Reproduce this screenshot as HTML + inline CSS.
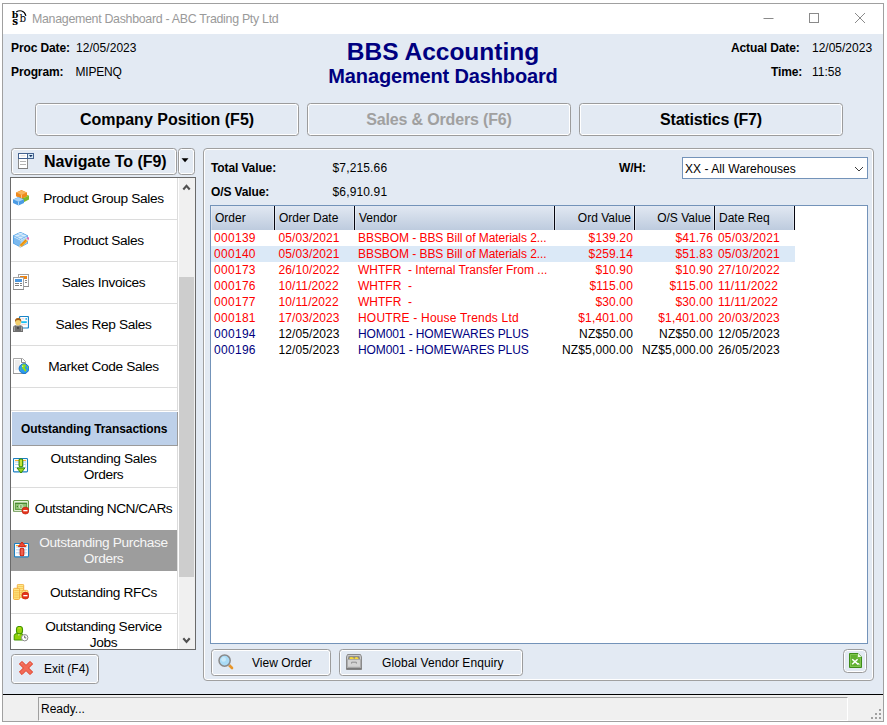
<!DOCTYPE html>
<html>
<head>
<meta charset="utf-8">
<title>Management Dashboard - ABC Trading Pty Ltd</title>
<style>
html,body{margin:0;padding:0;}
body{width:887px;height:725px;background:#fff;position:relative;overflow:hidden;font-family:"Liberation Sans",sans-serif;font-size:12px;color:#000;}
.a{position:absolute;white-space:nowrap;line-height:1;}
#win{left:2px;top:3px;width:880px;height:717px;border:1px solid #a0a0a0;background:#e3eaf3;}
#tbar{left:3px;top:4px;width:880px;height:30px;background:#fff;}
#ttl{left:32px;top:12.6px;font-size:12.4px;letter-spacing:-0.3px;color:#9a9a9a;}
.b{font-weight:bold;letter-spacing:-0.12px;}
.btn{border:1px solid #9c9c9c;border-radius:3.5px;box-shadow:inset 0 0 0 1px #fff;background:#e3eaf3;box-sizing:border-box;}
.tab{font-size:16px;font-weight:bold;text-align:center;}
.hd{color:#000080;font-weight:bold;text-align:center;}
#list{left:10px;top:177px;width:184px;height:471px;border:1px solid #6a6a6a;background:#fff;}
.row{left:11px;width:166px;border-bottom:1px solid #dcdcdc;border-right:1px solid #dcdcdc;background:#fff;box-sizing:content-box;}
.rt{font-size:13.7px;letter-spacing:-0.35px;text-align:center;left:31px;width:145px;line-height:16px;white-space:normal;}
#panel{left:203px;top:148px;width:669px;height:531px;border:1px solid #a0a0a0;border-radius:4px;box-shadow:inset 0 0 0 1px #fff;}
#grid{left:210px;top:205px;width:656px;height:437px;border:1px solid #7393b9;background:#fff;}
.gh{top:206px;height:24px;background:linear-gradient(#e1e8f2,#bdcbde);border-right:1px solid #05050f;box-sizing:border-box;box-shadow:inset -1px 0 0 rgba(255,255,255,.35), inset 1px 0 0 rgba(255,255,255,.35);}
.ght{top:212px;font-size:12px;}
.c{font-size:12px;}
.r{color:#ff0000;}
.n{color:#000080;}
.ra{text-align:right;}
#status{left:3px;top:695px;width:880px;height:26px;background:#f0f0f0;}
</style>
</head>
<body>
<div id="win" class="a"></div>
<div id="tbar" class="a"></div>
<!-- title icon -->
<svg class="a" style="left:8px;top:6px" width="24" height="24" viewBox="0 0 24 24">
<text x="3.8" y="12.9" transform="scale(1,0.93)" font-family="'DejaVu Serif',serif" font-size="10" textLength="6.6" lengthAdjust="spacingAndGlyphs" font-weight="bold" fill="#000">b</text>
<text x="4.2" y="19.1" font-family="'DejaVu Serif',serif" font-size="10.4" font-weight="bold" fill="#000">s</text>
<text x="11.6" y="15.9" font-family="'DejaVu Serif',serif" font-size="10.3" fill="#000">b</text>
<path d="M8.2 6 C11.5 3.8 16.4 4.2 17.9 9.8" fill="none" stroke="#000" stroke-width="1.2"/>
</svg>
<div id="ttl" class="a">Management Dashboard - ABC Trading Pty Ltd</div>
<!-- window controls -->
<svg class="a" style="left:760px;top:8px" width="110" height="20" viewBox="0 0 110 20">
<path d="M3.5 10.5 H13.5" stroke="#8a8a8a" stroke-width="1" fill="none"/>
<rect x="49.5" y="5.5" width="9" height="9" fill="none" stroke="#8a8a8a" stroke-width="1"/>
<path d="M95 5 L105 15 M105 5 L95 15" stroke="#8a8a8a" stroke-width="1" fill="none"/>
</svg>

<!-- header info -->
<div class="a b" id="pd" style="left:11px;top:42px;">Proc Date:</div>
<div class="a" id="pdv" style="left:76px;top:42px;letter-spacing:0.05px;">12/05/2023</div>
<div class="a b" id="pg" style="left:11px;top:66px;">Program:</div>
<div class="a" id="pgv" style="left:75.5px;top:66px;letter-spacing:-0.2px;">MIPENQ</div>
<div class="a hd" id="h1" style="left:243px;width:400px;top:40px;font-size:24.5px;">BBS Accounting</div>
<div class="a hd" id="h2" style="left:243px;width:400px;top:65.5px;font-size:20px;letter-spacing:-0.15px;">Management Dashboard</div>
<div class="a b" id="ad" style="left:731px;top:42px;">Actual Date:</div>
<div class="a" id="adv" style="left:812px;top:42px;">12/05/2023</div>
<div class="a b" id="tm" style="left:771px;top:66px;">Time:</div>
<div class="a" id="tmv" style="left:812px;top:66px;">11:58</div>

<!-- tabs -->
<div class="a btn" style="left:35px;top:103px;width:264px;height:33px;"></div>
<div class="a tab" id="t1" style="left:35px;top:111.6px;width:264px;">Company Position (F5)</div>
<div class="a btn" style="left:307px;top:103px;width:264px;height:33px;"></div>
<div class="a tab" id="t2" style="left:307px;top:111.6px;letter-spacing:-0.17px;width:264px;color:#a0a0a0;">Sales &amp; Orders (F6)</div>
<div class="a btn" style="left:579px;top:103px;width:264px;height:33px;"></div>
<div class="a tab" id="t3" style="left:579px;top:111.6px;letter-spacing:-0.2px;width:264px;">Statistics (F7)</div>

<!-- navigate -->
<div class="a btn" style="left:11px;top:148px;width:166px;height:27px;"></div>
<div class="a btn" style="left:178px;top:148px;width:17px;height:27px;"></div>
<svg class="a" style="left:18px;top:153px" width="16" height="16" viewBox="0 0 16 16">
<rect x="0.5" y="5.5" width="9" height="10" fill="#fff" stroke="#8c8c8c"/>
<path d="M0 15.5 h10" stroke="#7e7e7e"/>
<path d="M2 8.5 h6 M2 11.5 h6" stroke="#b4b4b4"/>
<rect x="0.5" y="0.5" width="15" height="5" fill="#fff" stroke="#44628f"/>
<rect x="10" y="1" width="5" height="4" fill="#d6ebf8"/>
<path d="M9.5 0.5 v5" stroke="#44628f"/>
<path d="M2.5 2.8 h5" stroke="#e4e4e4" stroke-width="1.4"/>
<path d="M11 2 h3.6 l-1.8 2.2z" fill="#16305e"/>
</svg>
<div class="a b" id="nav" style="left:44px;top:154px;font-size:16px;letter-spacing:-0.04px;">Navigate To (F9)</div>
<svg class="a" style="left:180px;top:158px" width="10" height="6" viewBox="0 0 10 6"><path d="M1.5 0.3 h7 l-3.5 4z" fill="#000"/></svg>

<!-- list -->
<div id="list" class="a"></div>
<div id="sb" class="a" style="left:179px;top:178px;width:16px;height:471px;background:#f0f0f0;"></div>
<div class="a" style="left:179px;top:277px;width:15px;height:300px;background:#cdcdcd;"></div>
<svg class="a" style="left:182px;top:183px" width="10" height="8" viewBox="0 0 10 8"><path d="M1.3 6.5 L4.5 2.8 L7.7 6.5" fill="none" stroke="#505050" stroke-width="2.1"/></svg>
<svg class="a" style="left:182px;top:636px" width="10" height="8" viewBox="0 0 10 8"><path d="M1.3 2.3 L4.5 6 L7.7 2.3" fill="none" stroke="#505050" stroke-width="2.1"/></svg>

<div class="a row" style="top:178px;height:41px;"></div>
<div class="a row" style="top:220px;height:41px;"></div>
<div class="a row" style="top:262px;height:41px;"></div>
<div class="a row" style="top:304px;height:41px;"></div>
<div class="a row" style="top:346px;height:41px;"></div>
<div class="a row" style="top:388px;height:22px;"></div>
<div class="a" style="left:12px;top:412px;width:165px;height:33px;background:#bdd0e9;border-bottom:1px solid #9a9a9a;border-right:1px solid #9a9a9a;"></div>
<div class="a row" style="top:446px;height:41px;"></div>
<div class="a row" style="top:488px;height:41px;"></div>
<div class="a" style="left:11px;top:529px;width:166px;height:43px;background:#fff;border-right:1px solid #dcdcdc;"></div>
<div class="a" style="left:11px;top:530px;width:166px;height:41px;background:#9d9d9d;"></div>
<div class="a row" style="top:572px;height:41px;"></div>
<div class="a row" style="top:614px;height:35px;border-bottom:none;"></div>

<div class="a rt" id="l1" style="top:190.6px;">Product Group Sales</div>
<div class="a rt" id="l2" style="top:232.6px;">Product Sales</div>
<div class="a rt" id="l3" style="top:274.6px;">Sales Invoices</div>
<div class="a rt" id="l4" style="top:316.6px;">Sales Rep Sales</div>
<div class="a rt" id="l5" style="top:358.6px;">Market Code Sales</div>
<div class="a b" id="l6" style="left:21px;top:423px;letter-spacing:-0.07px;">Outstanding Transactions</div>
<div class="a rt" id="l7" style="top:451px;">Outstanding Sales Orders</div>
<div class="a rt" id="l8" style="top:500.6px;letter-spacing:-0.47px;">Outstanding NCN/CARs</div>
<div class="a rt" id="l9" style="top:535px;color:#f6f6f6;">Outstanding Purchase Orders</div>
<div class="a rt" id="l10" style="top:584.6px;">Outstanding RFCs</div>
<div class="a rt" id="l11" style="top:619px;">Outstanding Service Jobs</div>


<!-- list icons -->
<svg class="a" style="left:13px;top:190px" width="16" height="16" viewBox="0 0 16 16">
<path d="M6 6 L11.5 3.8 L16 5.8 L16 9.6 L11.2 12 L6 10z" fill="#7cb82c"/>
<path d="M6.5 6 L11.5 4.1 L15.6 5.9 L11.2 8z" fill="#a5d455"/>
<path d="M3 2.5 L8.5 0 L14 2.5 L14 6.2 L8.5 8.7 L3 6.2z" fill="#ef8a1e"/>
<path d="M3.5 2.6 L8.5 0.4 L13.5 2.6 L8.5 4.9z" fill="#f8b65e"/>
<path d="M8.5 5 V8.6" stroke="#fbd19a" stroke-width="0.8"/>
<path d="M0 9.4 L5.5 6.9 L11 9.4 L11 13 L5.5 15.6 L0 13z" fill="#4b9be4"/>
<path d="M0.5 9.5 L5.5 7.3 L10.5 9.5 L5.5 11.8z" fill="#a7d2f6"/>
<path d="M5.5 11.9 V15.5" stroke="#c5e2fa" stroke-width="0.8"/>
</svg>
<svg class="a" style="left:13px;top:232px" width="16" height="16" viewBox="0 0 16 16">
<path d="M0 3.4 L5 1 L7.5 0 L10 1 L15 3.4 L15 11.6 L7.5 15.6 L0 11.6z" fill="#4f9fe4"/>
<path d="M0.6 3.7 L7.5 0.5 L14.4 3.7 L7.5 7.2z" fill="#9ccdf5"/>
<ellipse cx="4.3" cy="3.6" rx="2.3" ry="0.9" fill="#d9edfc"/><ellipse cx="10.7" cy="3.6" rx="2.3" ry="0.9" fill="#d9edfc"/>
<ellipse cx="7.5" cy="1.8" rx="2.3" ry="0.9" fill="#d9edfc"/><ellipse cx="7.5" cy="5.6" rx="2.1" ry="0.9" fill="#d9edfc"/>
<path d="M0.8 5 L7.5 8.4 L7.5 14.8 L0.8 11.2z" fill="#7ab9ef"/>
<path d="M7.5 8.4 L14.3 5 L14.3 11.2 L7.5 14.8z" fill="#a5d2f6"/>
<path d="M0.8 4.8 L7.5 8.2 L14.3 4.8" stroke="#e4f2fd" stroke-width="0.9" fill="none"/>
<path d="M6.6 13 L13.2 6.6 L15.2 8.6 L8.6 15z" fill="#f7a31b"/>
<path d="M7.2 13.6 L13.8 7.2" stroke="#d97c08" stroke-width="0.7"/>
<path d="M6.6 13 L6.2 15.4 L8.6 15z" fill="#f3d9a6"/>
<path d="M12.5 7.3 L13.9 5.9 L15.9 7.9 L14.5 9.3z" fill="#d9d9d9"/>
<path d="M13.6 6.2 L14.6 5.2 Q15.6 4.8 16 6 L16 7.2 L15.6 7.9z" fill="#e765b5"/>
</svg>
<svg class="a" style="left:13px;top:274px" width="16" height="16" viewBox="0 0 16 16">
<rect x="5.5" y="0.5" width="10" height="12" fill="#fff" stroke="#a3a3a3"/>
<path d="M5 12.5 h11" stroke="#8d8d8d"/>
<rect x="7" y="2" width="7" height="3" fill="#ee8411"/>
<path d="M12 6.5 h2 M12 8.5 h2" stroke="#8a8a8a"/>
<rect x="0.5" y="3.5" width="10" height="12" fill="#fff" stroke="#a3a3a3"/>
<path d="M0 15.5 h11" stroke="#8d8d8d"/>
<rect x="2" y="5" width="7" height="3" fill="#4a97e0"/>
<path d="M2 9.5 h4 M7 9.5 h2 M2 11.5 h4 M7 11.5 h2" stroke="#7d7d7d"/>
</svg>
<svg class="a" style="left:13px;top:316px" width="16" height="16" viewBox="0 0 16 16">
<rect x="6.5" y="0.5" width="9" height="11.5" rx="1" fill="#fff" stroke="#1b84c6" stroke-width="1.2"/>
<rect x="8.2" y="5.2" width="5.6" height="1.9" fill="#1cc0f2"/>
<circle cx="13.2" cy="2.9" r="0.9" fill="#1cb0ec"/>
<path d="M8.4 2.8 h3 M8.4 8.6 h5.2" stroke="#e0b8b8" stroke-width="0.7"/>
<path d="M0 16 L0 11.6 Q0 9.6 2.4 9.2 L7.6 9.2 Q10 9.6 10 11.6 L10 16z" fill="#6e6e6e"/>
<path d="M3.4 9.2 L5 12.6 L6.6 9.2z" fill="#fff"/>
<path d="M4.5 9.6 h1 l0.3 2.6 l-0.8 0.8 l-0.8 -0.8z" fill="#222"/>
<path d="M1.4 10.5 v4.5 M8.6 10.5 v4.5" stroke="#b8b8b8" stroke-width="0.8"/>
<ellipse cx="5.1" cy="6" rx="2.9" ry="3.4" fill="#f2cf6e"/>
<path d="M2 6.2 Q1.6 2 5.1 2 Q8.8 2 8.2 6.2 Q7.6 4 5.1 4 Q2.6 4 2 6.2z" fill="#a35d12"/>
</svg>
<svg class="a" style="left:13px;top:358px" width="16" height="16" viewBox="0 0 16 16">
<path d="M0.5 0.5 H9.5 L12.5 3.5 V15.5 H0.5z" fill="#fff" stroke="#a9a9a9"/>
<path d="M0 15.5 h13" stroke="#9a9a9a"/>
<rect x="2" y="2" width="5" height="10" fill="#ececec"/>
<path d="M8.5 1 V4.5 H12" stroke="#6f6f6f" fill="none" stroke-width="0.8"/>
<circle cx="11" cy="10.6" r="4.9" fill="#2c9af0" stroke="#0d6fc8" stroke-width="0.9"/>
<path d="M9.2 6.6 Q11.4 5.8 13 6.8 L12.6 8.6 L11.6 9.4 L12.6 11.2 L13.8 11.8 L12.2 14 L11.2 12.6 L10.4 11.4 L9 10 L8.8 8z" fill="#92dd13"/>
<path d="M14.2 8 L15.2 9.6 L14.4 10.6 L13.6 9z M7.2 10.2 L8 11.4 L7.4 12.2z" fill="#92dd13"/>
<circle cx="9.6" cy="8.2" r="0.8" fill="#cfeaff" opacity="0.8"/>
</svg>
<svg class="a" style="left:13px;top:458px" width="16" height="16" viewBox="0 0 16 16">
<rect x="0.5" y="0.5" width="14" height="13.4" rx="0.8" fill="#fff" stroke="#1b7fc2" stroke-width="1.1"/>
<path d="M2 2.4 h11" stroke="#f9a91a" stroke-width="1"/>
<path d="M2 4 h11 M2 6.5 h11 M2 9.5 h11" stroke="#a9cdee" stroke-width="0.9"/>
<path d="M10.5 3 v7 M12.5 3 v7" stroke="#bcd8f2" stroke-width="0.6"/>
<rect x="6.1" y="1" width="3.6" height="7.8" rx="1.2" fill="#c4e436" stroke="#2f8a00" stroke-width="1.1"/>
<path d="M4 10 H11.9 L8 15z" fill="#9fd620" stroke="#2f8a00" stroke-width="1" stroke-linejoin="round"/>
</svg>
<svg class="a" style="left:13px;top:500px" width="16" height="16" viewBox="0 0 16 16">
<rect x="0.5" y="0.5" width="15" height="11" rx="1.2" fill="#e9f5dc" stroke="#6a9c4a" stroke-width="1.1"/>
<path d="M0.4 11.4 h15" stroke="#8fae7c" stroke-width="0.9"/>
<rect x="2.3" y="3.2" width="11.4" height="6.2" fill="#8fc474" stroke="#4f9332" stroke-width="0.9"/>
<path d="M2.3 3.3 h11.4" stroke="#3f7f26" stroke-width="0.9"/>
<ellipse cx="8" cy="6.5" rx="2.3" ry="2.3" fill="#d6ecc8"/>
<circle cx="4.4" cy="6.5" r="0.7" fill="#3f7f26"/>
<path d="M7.4 5 v3 M8.8 5 v3" stroke="#5d9b43" stroke-width="0.7"/>
<circle cx="12.4" cy="10.6" r="3.5" fill="#e3331b"/>
<circle cx="12.4" cy="10.6" r="3.5" fill="none" stroke="#c21f0c" stroke-width="0.6"/>
<rect x="10.3" y="10" width="4.2" height="1.3" fill="#fff"/>
</svg>
<svg class="a" style="left:14px;top:541px" width="16" height="17" viewBox="0 0 16 17">
<rect x="0.5" y="2.5" width="14" height="13.4" rx="0.8" fill="#fff" stroke="#1b7fc2" stroke-width="1.1"/>
<path d="M2 4.6 h11" stroke="#f9a91a" stroke-width="1"/>
<path d="M2 6 h11 M2 8.8 h11 M2 11.8 h11" stroke="#a9cdee" stroke-width="0.9"/>
<path d="M5.2 6 v8 M11.2 6 v8" stroke="#bcd8f2" stroke-width="0.6"/>
<path d="M4.3 5.6 L8 1 L11.8 5.6z" fill="#ee4a36" stroke="#cf2410" stroke-width="1" stroke-linejoin="round"/>
<rect x="6.2" y="7.3" width="3.6" height="7.4" rx="1.3" fill="#f0604e" stroke="#cf2410" stroke-width="1.1"/>
</svg>
<svg class="a" style="left:13px;top:584px" width="16" height="16" viewBox="0 0 16 16">
<rect x="4.3" y="0.3" width="6.4" height="13" rx="1.2" fill="#ffe88a" stroke="#f0a838" stroke-width="0.9"/>
<path d="M5 2.5 h5 M5 4.5 h5 M5 6.5 h5 M5 8.5 h5 M5 10.5 h5" stroke="#f6c14a" stroke-width="0.7"/>
<rect x="9" y="6.4" width="6" height="8" rx="1.2" fill="#ffe88a" stroke="#f0a838" stroke-width="0.9"/>
<rect x="0.4" y="4.3" width="6.2" height="11.2" rx="1.2" fill="#ffe680" stroke="#f0a838" stroke-width="0.9"/>
<path d="M1.2 6.5 h4.6 M1.2 8.3 h4.6 M1.2 10.1 h4.6 M1.2 11.9 h4.6 M1.2 13.7 h4.6" stroke="#f3b640" stroke-width="0.7"/>
<circle cx="12.4" cy="11.6" r="3.5" fill="#e3331b"/>
<circle cx="12.4" cy="11.6" r="3.5" fill="none" stroke="#c21f0c" stroke-width="0.6"/>
<rect x="10.3" y="11" width="4.2" height="1.3" fill="#fff"/>
</svg>
<svg class="a" style="left:13px;top:626px" width="16" height="16" viewBox="0 0 16 16">
<path d="M1.2 14 L1.2 9.6 Q1.2 7.8 3.6 7.6 L7.8 7.6 Q10.2 7.8 10.2 9.6 L10.2 14z" fill="#8fd108" stroke="#3f9400" stroke-width="1"/>
<rect x="3.5" y="0.5" width="6" height="7.2" rx="2.4" fill="#96d40c" stroke="#3f9400" stroke-width="1.1"/>
<ellipse cx="6.4" cy="2" rx="1.9" ry="0.8" fill="#c9dc1c"/>
<path d="M5 8.2 L5.9 10 L6.8 8.2z" fill="#e8f5c4"/>
<circle cx="11.7" cy="11.7" r="3.2" fill="#fff" stroke="#8c8c8c" stroke-width="1"/>
<path d="M11.7 9.6 V11.9 H13.3" stroke="#555" stroke-width="0.9" fill="none"/>
</svg>
<!-- exit -->
<div class="a btn" style="left:11px;top:654px;width:88px;height:30px;"></div>
<svg class="a" style="left:19px;top:661px" width="14" height="14" viewBox="0 0 14 14"><path d="M0.4 3 L3 0.4 L7 4.4 L11 0.4 L13.6 3 L9.6 7 L13.6 11 L11 13.6 L7 9.6 L3 13.6 L0.4 11 L4.4 7z" fill="#f26a56" stroke="#e03a22" stroke-width="1" stroke-linejoin="round"/><path d="M2.6 2.8 L3.2 2.2 M10.8 2.2 L11.4 2.8" stroke="#f9b0a4" stroke-width="0.8"/></svg>
<div class="a" id="ex" style="left:44px;top:663px;">Exit (F4)</div>

<!-- panel -->
<div id="panel" class="a"></div>
<div class="a b" id="tv" style="left:211px;top:162px;">Total Value:</div>
<div class="a" id="tvv" style="left:332.5px;top:162px;letter-spacing:0.15px;">$7,215.66</div>
<div class="a b" id="ov" style="left:211px;top:186px;">O/S Value:</div>
<div class="a" id="ovv" style="left:332.5px;top:186px;letter-spacing:0.15px;">$6,910.91</div>
<div class="a b" id="wh" style="left:619px;top:162px;">W/H:</div>
<div class="a" style="left:682px;top:157px;width:184px;height:20px;border:1px solid #7393b9;background:#fff;"></div>
<div class="a c" id="whv" style="left:685px;top:163px;letter-spacing:0.06px;">XX - All Warehouses</div>
<svg class="a" style="left:854px;top:165px" width="11" height="8" viewBox="0 0 11 8"><path d="M1 2 L5 6 L9 2" fill="none" stroke="#3c3c3c" stroke-width="1"/></svg>

<div id="grid" class="a"></div>
<div class="a gh" style="left:211px;width:64px;"></div>
<div class="a gh" style="left:275px;width:80px;"></div>
<div class="a gh" style="left:355px;width:200px;"></div>
<div class="a gh" style="left:555px;width:80px;"></div>
<div class="a gh" style="left:635px;width:80px;"></div>
<div class="a gh" style="left:715px;width:80px;"></div>
<div class="a ght" id="g1" style="left:215px;">Order</div>
<div class="a ght" id="g2" style="left:279px;">Order Date</div>
<div class="a ght" id="g3" style="left:359px;">Vendor</div>
<div class="a ght ra" id="g4" style="left:555px;width:76px;">Ord Value</div>
<div class="a ght ra" id="g5" style="left:635px;width:76px;">O/S Value</div>
<div class="a ght" id="g6" style="left:719px;">Date Req</div>

<div class="a" style="left:211px;top:246px;width:584px;height:16px;background:#dbe9f7;"></div>

<!--ROWS-->
<div class="a c r" id="r0a" style="left:214px;top:232px;letter-spacing:0.3px;">000139</div>
<div class="a c r" id="r0b" style="left:278.5px;top:232px;letter-spacing:0.1px;">05/03/2021</div>
<div class="a c r" id="r0c" style="left:358px;top:232px;white-space:pre;letter-spacing:-0.06px;">BBSBOM - BBS Bill of Materials 2...</div>
<div class="a c ra r" id="r0d" style="left:533px;width:100px;top:232px;letter-spacing:0.15px;">$139.20</div>
<div class="a c ra r" id="r0e" style="left:613px;width:100px;top:232px;letter-spacing:0.15px;">$41.76</div>
<div class="a c r" id="r0f" style="left:718px;top:232px;letter-spacing:0.18px;">05/03/2021</div>
<div class="a c r" id="r1a" style="left:214px;top:248px;letter-spacing:0.3px;">000140</div>
<div class="a c r" id="r1b" style="left:278.5px;top:248px;letter-spacing:0.1px;">05/03/2021</div>
<div class="a c r" id="r1c" style="left:358px;top:248px;white-space:pre;letter-spacing:-0.06px;">BBSBOM - BBS Bill of Materials 2...</div>
<div class="a c ra r" id="r1d" style="left:533px;width:100px;top:248px;letter-spacing:0.15px;">$259.14</div>
<div class="a c ra r" id="r1e" style="left:613px;width:100px;top:248px;letter-spacing:0.15px;">$51.83</div>
<div class="a c r" id="r1f" style="left:718px;top:248px;letter-spacing:0.18px;">05/03/2021</div>
<div class="a c r" id="r2a" style="left:214px;top:264px;letter-spacing:0.3px;">000173</div>
<div class="a c r" id="r2b" style="left:278.5px;top:264px;letter-spacing:0.1px;">26/10/2022</div>
<div class="a c r" id="r2c" style="left:358px;top:264px;white-space:pre;letter-spacing:0px;">WHTFR  - Internal Transfer From ...</div>
<div class="a c ra r" id="r2d" style="left:533px;width:100px;top:264px;letter-spacing:0.15px;">$10.90</div>
<div class="a c ra r" id="r2e" style="left:613px;width:100px;top:264px;letter-spacing:0.15px;">$10.90</div>
<div class="a c r" id="r2f" style="left:718px;top:264px;letter-spacing:0.18px;">27/10/2022</div>
<div class="a c r" id="r3a" style="left:214px;top:280px;letter-spacing:0.3px;">000176</div>
<div class="a c r" id="r3b" style="left:278.5px;top:280px;letter-spacing:0.1px;">10/11/2022</div>
<div class="a c r" id="r3c" style="left:358px;top:280px;white-space:pre;letter-spacing:0px;">WHTFR  -</div>
<div class="a c ra r" id="r3d" style="left:533px;width:100px;top:280px;letter-spacing:0.15px;">$115.00</div>
<div class="a c ra r" id="r3e" style="left:613px;width:100px;top:280px;letter-spacing:0.15px;">$115.00</div>
<div class="a c r" id="r3f" style="left:718px;top:280px;letter-spacing:0.18px;">11/11/2022</div>
<div class="a c r" id="r4a" style="left:214px;top:296px;letter-spacing:0.3px;">000177</div>
<div class="a c r" id="r4b" style="left:278.5px;top:296px;letter-spacing:0.1px;">10/11/2022</div>
<div class="a c r" id="r4c" style="left:358px;top:296px;white-space:pre;letter-spacing:0px;">WHTFR  -</div>
<div class="a c ra r" id="r4d" style="left:533px;width:100px;top:296px;letter-spacing:0.15px;">$30.00</div>
<div class="a c ra r" id="r4e" style="left:613px;width:100px;top:296px;letter-spacing:0.15px;">$30.00</div>
<div class="a c r" id="r4f" style="left:718px;top:296px;letter-spacing:0.18px;">11/11/2022</div>
<div class="a c r" id="r5a" style="left:214px;top:312px;letter-spacing:0.3px;">000181</div>
<div class="a c r" id="r5b" style="left:278.5px;top:312px;letter-spacing:0.1px;">17/03/2023</div>
<div class="a c r" id="r5c" style="left:358px;top:312px;white-space:pre;letter-spacing:0.19px;">HOUTRE - House Trends Ltd</div>
<div class="a c ra r" id="r5d" style="left:533px;width:100px;top:312px;letter-spacing:0.15px;">$1,401.00</div>
<div class="a c ra r" id="r5e" style="left:613px;width:100px;top:312px;letter-spacing:0.15px;">$1,401.00</div>
<div class="a c r" id="r5f" style="left:718px;top:312px;letter-spacing:0.18px;">20/03/2023</div>
<div class="a c n" id="r6a" style="left:214px;top:328px;letter-spacing:0.3px;">000194</div>
<div class="a c " id="r6b" style="left:278.5px;top:328px;letter-spacing:0.1px;">12/05/2023</div>
<div class="a c n" id="r6c" style="left:358px;top:328px;white-space:pre;letter-spacing:-0.1px;">HOM001 - HOMEWARES PLUS</div>
<div class="a c ra " id="r6d" style="left:533px;width:100px;top:328px;letter-spacing:0.15px;">NZ$50.00</div>
<div class="a c ra " id="r6e" style="left:613px;width:100px;top:328px;letter-spacing:0.15px;">NZ$50.00</div>
<div class="a c " id="r6f" style="left:718px;top:328px;letter-spacing:0.18px;">12/05/2023</div>
<div class="a c n" id="r7a" style="left:214px;top:344px;letter-spacing:0.3px;">000196</div>
<div class="a c " id="r7b" style="left:278.5px;top:344px;letter-spacing:0.1px;">12/05/2023</div>
<div class="a c n" id="r7c" style="left:358px;top:344px;white-space:pre;letter-spacing:-0.1px;">HOM001 - HOMEWARES PLUS</div>
<div class="a c ra " id="r7d" style="left:533px;width:100px;top:344px;letter-spacing:0.15px;">NZ$5,000.00</div>
<div class="a c ra " id="r7e" style="left:613px;width:100px;top:344px;letter-spacing:0.15px;">NZ$5,000.00</div>
<div class="a c " id="r7f" style="left:718px;top:344px;letter-spacing:0.18px;">26/05/2023</div>
<!--/ROWS-->

<!-- bottom buttons -->
<div class="a btn" style="left:211px;top:649px;width:120px;height:27px;"></div>
<div class="a" id="vo" style="left:252px;top:657px;">View Order</div>
<div class="a btn" style="left:339px;top:649px;width:184px;height:27px;"></div>
<div class="a" id="gv" style="left:382px;top:657px;letter-spacing:0.07px;">Global Vendor Enquiry</div>
<div class="a btn" style="left:843px;top:649px;width:24px;height:24px;border-radius:4.5px;"></div>


<!-- button icons -->
<svg class="a" style="left:217px;top:653px" width="18" height="18" viewBox="0 0 18 18">
<path d="M11.5 11.5 L15 15" stroke="#e8962a" stroke-width="2.6" stroke-linecap="round"/>
<path d="M11 11 L12.4 12.4" stroke="#b9b9b9" stroke-width="2.4"/>
<circle cx="7.6" cy="7.6" r="5.6" fill="#a9dbf6" stroke="#8a8a8a" stroke-width="1.5"/>
<circle cx="6.6" cy="6.4" r="2.4" fill="#d2edfb" opacity="0.8"/>
</svg>
<svg class="a" style="left:346px;top:654px" width="16" height="16" viewBox="0 0 16 16">
<path d="M1.5 0.5 H14.5 L15.5 3 V15.5 H0.5 V3z" fill="#c9c9c9" stroke="#8a8a8a"/>
<path d="M2.6 2.2 H13.4 L14 5.4 H2z" fill="#7d7d7d"/>
<path d="M3.6 3.6 L5 3 L7.6 3.6 L8 5.4 H3.4z M8.6 3.4 L10.6 3 L12.4 3.8 L12.6 5.4 H8.4z" fill="#f7d83a"/>
<rect x="1.6" y="5.6" width="12.8" height="7.6" fill="#d4d4d4" stroke="#a6a6a6" stroke-width="0.8"/>
<path d="M5.6 9.6 V8.2 H10.4 V9.6" fill="none" stroke="#8f8f8f" stroke-width="1"/>
<path d="M0.5 14.6 H15.5" stroke="#7a7a7a" stroke-width="1.6"/>
</svg>
<svg class="a" style="left:849px;top:653px" width="13" height="15" viewBox="0 0 13 15">
<path d="M0.5 0.5 H9 L12.5 4 V14.5 H0.5z" fill="#62b132" stroke="#3f8c1a"/>
<path d="M1.5 1.5 H8.6 V5 H11.5 V13.5 H1.5z" fill="none" stroke="#86cc55" stroke-width="0.8"/>
<path d="M9 0.6 L12.4 4 H9z" fill="#f4faef"/>
<path d="M3.2 6.2 L9.2 11.4 M8.6 6.2 L3.2 11.2" stroke="#fff" stroke-width="1.5"/>
<path d="M8.4 10.6 H10 V12.2" stroke="#fff" stroke-width="0.9" fill="none"/>
</svg>
<!-- status -->
<div class="a" style="left:3px;top:694px;width:880px;height:1px;background:#000;"></div>
<div id="status" class="a"></div>
<div class="a" style="left:38px;top:697px;width:810px;height:24px;border-top:1px solid #a0a0a0;border-left:1px solid #a0a0a0;border-right:1px solid #fff;border-bottom:1px solid #fff;box-sizing:border-box;"></div>
<div class="a" id="rd" style="left:41px;top:703px;">Ready...</div>
<svg class="a" style="left:870px;top:708px" width="12" height="12" viewBox="0 0 12 12" fill="#a0a0a0">
<rect x="9" y="1" width="2" height="2"/><rect x="5" y="5" width="2" height="2"/><rect x="9" y="5" width="2" height="2"/>
<rect x="1" y="9" width="2" height="2"/><rect x="5" y="9" width="2" height="2"/><rect x="9" y="9" width="2" height="2"/>
</svg>
</body>
</html>
